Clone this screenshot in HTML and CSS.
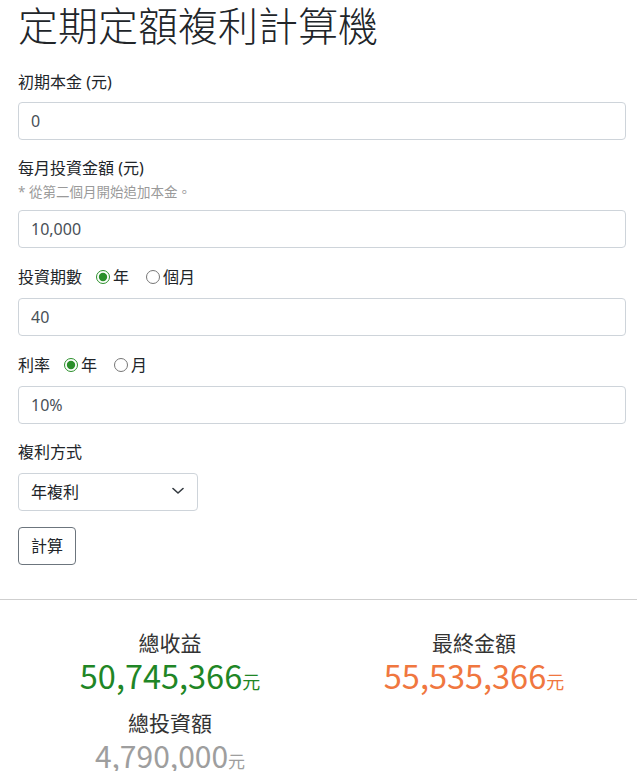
FILE: index.html
```html
<!DOCTYPE html>
<html lang="zh-Hant">
<head>
<meta charset="utf-8">
<title>定期定額複利計算機</title>
<link rel="stylesheet" href="styles.css">
</head>
<body>
<main class="container">
  <h1 class="title">定期定額複利計算機</h1>

  <div class="field">
    <label class="label" for="principal">初期本金 (元)</label>
    <input class="control" id="principal" type="text" value="0">
  </div>

  <div class="field">
    <label class="label label-tight" for="monthly">每月投資金額 (元)</label>
    <span class="hint">* 從第二個月開始追加本金。</span>
    <input class="control" id="monthly" type="text" value="10,000">
  </div>

  <div class="field">
    <div class="radio-row">
      <span class="field-name">投資期數</span>
      <label class="opt"><input type="radio" name="period" checked>年</label>
      <label class="opt"><input type="radio" name="period">個月</label>
    </div>
    <input class="control" type="text" value="40">
  </div>

  <div class="field">
    <div class="radio-row">
      <span class="field-name">利率</span>
      <label class="opt"><input type="radio" name="rate" checked>年</label>
      <label class="opt"><input type="radio" name="rate">月</label>
    </div>
    <input class="control" type="text" value="10%">
  </div>

  <div class="field">
    <label class="label label-select" for="mode">複利方式</label>
    <div class="select-wrap">
      <select class="select" id="mode">
        <option>年複利</option>
        <option>月複利</option>
      </select>
      <svg class="chevron" width="12" height="8" viewBox="0 0 12 8" aria-hidden="true"><path d="M1 1.5 L6 6 L11 1.5" fill="none" stroke="#343a40" stroke-width="1.6" stroke-linecap="round" stroke-linejoin="round"/></svg>
    </div>
  </div>

  <button class="btn" type="button">計算</button>
</main>

<hr class="divider">

<section class="results">
  <div class="stat">
    <div class="stat-label">總收益</div>
    <div class="stat-value green">50,745,366<span class="unit">元</span></div>
  </div>
  <div class="stat">
    <div class="stat-label">最終金額</div>
    <div class="stat-value orange">55,535,366<span class="unit">元</span></div>
  </div>
  <div class="stat">
    <div class="stat-label">總投資額</div>
    <div class="stat-value gray">4,790,000<span class="unit">元</span></div>
  </div>
</section>
</body>
</html>
```

FILE: styles.css
```css
html, body {
  margin: 0;
  padding: 0;
  background: #fff;
}

body {
  font-family: "Segoe UI", "Noto Sans", "Noto Sans CJK TC", sans-serif;
  font-size: 16px;
  line-height: 24px;
  color: #212529;
  overflow: hidden;
}

.container {
  padding: 0 11px 0 18px;
}

.title {
  margin: 0 0 22px;
  font-family: "Noto Sans CJK TC", sans-serif;
  font-size: 40px;
  line-height: 48px;
  font-weight: 300;
  color: #212529;
}

.field {
  margin-bottom: 16px;
}

.label {
  display: block;
  margin-bottom: 8px;
  line-height: 24px;
}

.label-select {
  margin-bottom: 9px;
}

.hint {
  display: block;
  margin: -6px 0 8px;
  font-size: 13.5px;
  line-height: 20px;
  color: #9a9a9a;
}

.control,
.select {
  display: block;
  box-sizing: border-box;
  width: 100%;
  height: 38px;
  margin: 0;
  padding: 6px 12px;
  font-family: inherit;
  font-size: 16px;
  line-height: 24px;
  color: #495057;
  background: #fff;
  border: 1px solid #ced4da;
  border-radius: 4px;
  outline: none;
}

.radio-row {
  display: flex;
  align-items: center;
  height: 26px;
  margin-bottom: 8px;
}

.field-name {
  margin-right: 14px;
}

.opt {
  display: flex;
  align-items: center;
  margin-right: 17px;
}

.opt input {
  width: 14px;
  height: 14px;
  margin: 0 3px 0 0;
  accent-color: #2a8f2a;
}

.select-wrap {
  position: relative;
  width: 180px;
}

.select {
  appearance: none;
  -webkit-appearance: none;
  color: #212529;
}

.chevron {
  position: absolute;
  left: 154px;
  top: 14px;
  pointer-events: none;
}

.btn {
  display: block;
  box-sizing: border-box;
  height: 38px;
  margin: 0;
  padding: 6px 12px;
  font-family: inherit;
  font-size: 16px;
  line-height: 24px;
  color: #212529;
  background: #fff;
  border: 1px solid #6c757d;
  border-radius: 4px;
}

.divider {
  margin: 34px 0 0;
  height: 0;
  border: 0;
  border-top: 1px solid #cfcfcf;
}

.results {
  display: grid;
  grid-template-columns: 1fr 1fr;
  row-gap: 14px;
  padding: 27px 11px 0 18px;
}

.stat {
  text-align: center;
}

.stat-label {
  font-family: "Noto Sans CJK TC", sans-serif;
  font-size: 21px;
  line-height: 30px;
  color: #333;
}

.stat-value {
  font-family: "Noto Sans CJK TC", sans-serif;
  font-size: 32.5px;
  line-height: 36px;
}

.unit {
  font-size: 18px;
  line-height: 1;
}

.green { color: #1f8626; }
.orange { color: #f0773f; }
.gray {
  color: #9e9e9e;
  font-size: 30px;
}
.gray .unit { font-size: 17px; }
```
